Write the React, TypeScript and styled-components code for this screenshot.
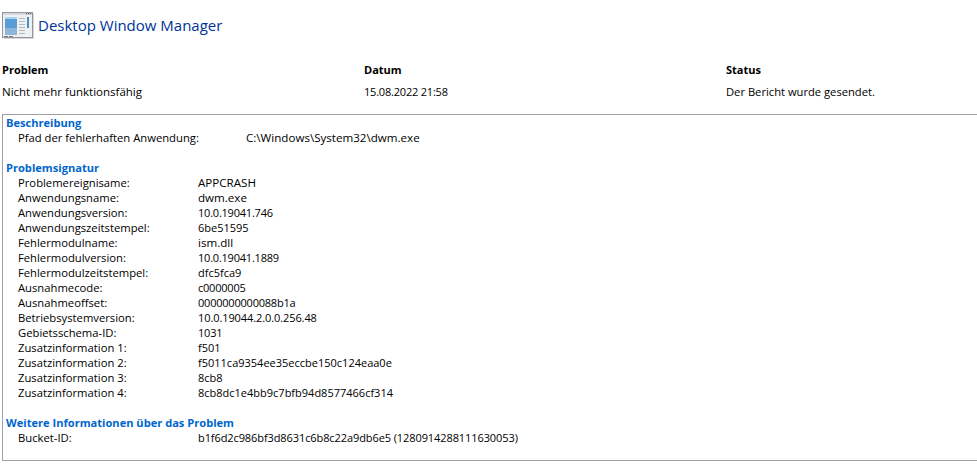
import styled, { createGlobalStyle } from "styled-components";

const GlobalStyle = createGlobalStyle`
  html, body {
    margin: 0;
    padding: 0;
    background: #fff;
    overflow: hidden;
  }
  body {
    font-family: "Open Sans", "Noto Sans", sans-serif;
    font-size: 11px;
    color: #000;
  }
`;

const Page = styled.div`
  width: 977px;
  height: 470px;
  padding: 10px 0 0 2px;
  box-sizing: border-box;
`;

const TitleRow = styled.div`
  display: flex;
  align-items: center;
  gap: 4px;
  height: 30px;
`;

const Title = styled.h1`
  margin: 0;
  font-size: 15px;
  font-weight: 400;
  color: #003399;
`;

const Summary = styled.div`
  display: grid;
  grid-template-columns: 362px 362px 1fr;
  grid-auto-rows: 22px;
  margin-top: 18px;
  align-items: center;
`;

const HeadCell = styled.div`
  font-weight: 700;
`;

const Cell = styled.div<{ $size: number; $tight?: boolean }>`
  font-size: ${(p) => p.$size}px;
  letter-spacing: ${(p) => (p.$tight ? "-0.2px" : "0")};
`;

const Details = styled.div`
  margin-top: 12px;
  height: 347px;
  box-sizing: border-box;
  border: 1px solid #a0a0a0;
  border-right: 0;
  padding: 0 0 0 3px;
  line-height: 15px;
`;

const Section = styled.section`
  margin-bottom: 15px;
`;

const SectionTitle = styled.div`
  font-size: 11.1px;
  font-weight: 700;
  color: #0066cc;
`;

const Row = styled.div<{ $labelWidth: number }>`
  display: grid;
  grid-template-columns: ${(p) => p.$labelWidth}px 1fr;
  padding-left: 12px;
  height: 15px;
`;

const Label = styled.span`
  font-size: 11.25px;
`;

type ValueKind = "text" | "digits" | "hash" | "mixed";

const spacing: Record<ValueKind, string> = {
  text: "0",
  digits: "-0.22px",
  hash: "0",
  mixed: "-0.09px",
};

const Value = styled.span<{ $kind: ValueKind }>`
  font-size: ${(p) => (p.$kind === "text" ? "11.6px" : "11px")};
  letter-spacing: ${(p) => spacing[p.$kind]};
`;

const WindowIcon = () => (
  <svg width="32" height="28" viewBox="0 0 32 28">
    <rect x="2" y="3" width="30" height="25" fill="#d8d8d8" />
    <rect x="0.5" y="1.5" width="30" height="25" fill="#eef0f2" stroke="#92969c" />
    <rect x="1" y="2" width="29" height="2" fill="#d5d8dc" />
    <rect x="24" y="2" width="1.2" height="1.2" fill="#666" />
    <rect x="26" y="2" width="1.2" height="1.2" fill="#666" />
    <rect x="28" y="2" width="1.2" height="1.2" fill="#666" />
    <rect x="3" y="6" width="12" height="18" fill="#5a9cd6" />
    <rect x="3" y="6" width="12" height="2" fill="#a9d2f0" />
    <rect x="3" y="17" width="12" height="7" fill="#8db6d8" />
    <rect x="17" y="7" width="6" height="1" fill="#b4b8be" />
    <rect x="17" y="10" width="6" height="1" fill="#b4b8be" />
    <rect x="17" y="13" width="6" height="1" fill="#b4b8be" />
    <rect x="17" y="16" width="6" height="1" fill="#b4b8be" />
    <rect x="17" y="19" width="6" height="1" fill="#b4b8be" />
    <rect x="17" y="22" width="6" height="1" fill="#b4b8be" />
    <rect x="25" y="6" width="2" height="11" fill="#3f8fd2" />
    <rect x="2" y="25" width="4" height="1" fill="#7c7c7c" />
    <rect x="7" y="25" width="4" height="1" fill="#7c7c7c" />
  </svg>
);

const sections: {
  title: string;
  labelWidth: number;
  rows: [string, string, ValueKind][];
}[] = [
  {
    title: "Beschreibung",
    labelWidth: 228,
    rows: [["Pfad der fehlerhaften Anwendung:", "C:\\Windows\\System32\\dwm.exe", "text"]],
  },
  {
    title: "Problemsignatur",
    labelWidth: 180,
    rows: [
      ["Problemereignisame:", "APPCRASH", "text"],
      ["Anwendungsname:", "dwm.exe", "text"],
      ["Anwendungsversion:", "10.0.19041.746", "digits"],
      ["Anwendungszeitstempel:", "6be51595", "hash"],
      ["Fehlermodulname:", "ism.dll", "text"],
      ["Fehlermodulversion:", "10.0.19041.1889", "digits"],
      ["Fehlermodulzeitstempel:", "dfc5fca9", "hash"],
      ["Ausnahmecode:", "c0000005", "digits"],
      ["Ausnahmeoffset:", "0000000000088b1a", "digits"],
      ["Betriebsystemversion:", "10.0.19044.2.0.0.256.48", "mixed"],
      ["Gebietsschema-ID:", "1031", "digits"],
      ["Zusatzinformation 1:", "f501", "hash"],
      ["Zusatzinformation 2:", "f5011ca9354ee35eccbe150c124eaa0e", "hash"],
      ["Zusatzinformation 3:", "8cb8", "hash"],
      ["Zusatzinformation 4:", "8cb8dc1e4bb9c7bfb94d8577466cf314", "hash"],
    ],
  },
  {
    title: "Weitere Informationen über das Problem",
    labelWidth: 180,
    rows: [["Bucket-ID:", "b1f6d2c986bf3d8631c6b8c22a9db6e5 (1280914288111630053)", "mixed"]],
  },
];

export default function App() {
  return (
    <Page>
      <GlobalStyle />
      <TitleRow>
        <WindowIcon />
        <Title>Desktop Window Manager</Title>
      </TitleRow>
      <Summary>
        <HeadCell>Problem</HeadCell>
        <HeadCell>Datum</HeadCell>
        <HeadCell>Status</HeadCell>
        <Cell $size={11.5}>Nicht mehr funktionsfähig</Cell>
        <Cell $size={11} $tight>15.08.2022 21:58</Cell>
        <Cell $size={11.2}>Der Bericht wurde gesendet.</Cell>
      </Summary>
      <Details>
        {sections.map((s) => (
          <Section key={s.title}>
            <SectionTitle>{s.title}</SectionTitle>
            {s.rows.map(([label, value, kind]) => (
              <Row key={label} $labelWidth={s.labelWidth}>
                <Label>{label}</Label>
                <Value $kind={kind}>{value}</Value>
              </Row>
            ))}
          </Section>
        ))}
      </Details>
    </Page>
  );
}
